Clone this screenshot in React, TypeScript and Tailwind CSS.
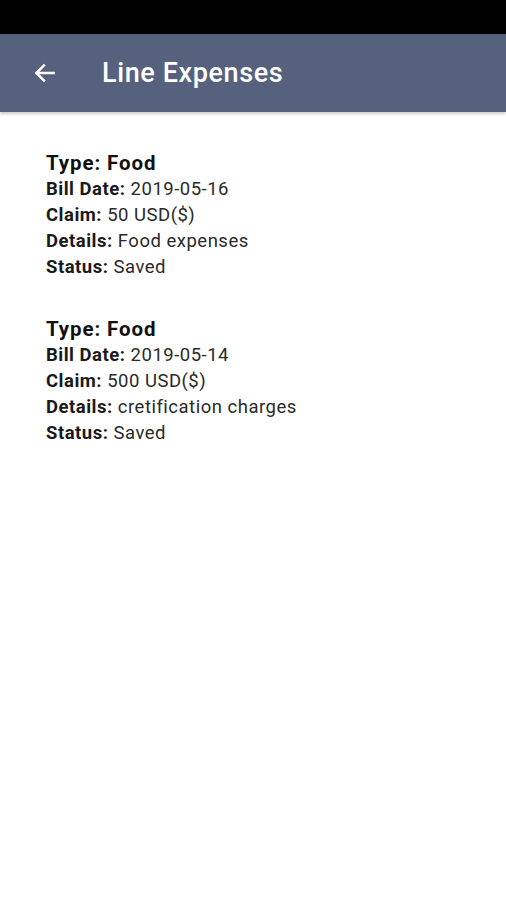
import React from "react";

const items = [
  { type: "Food", date: "2019-05-16", claim: "50 USD($)", details: "Food expenses", status: "Saved" },
  { type: "Food", date: "2019-05-14", claim: "500 USD($)", details: "cretification charges", status: "Saved" },
];

function Row({ label, value }: { label: string; value: string }) {
  return (
    <div className="h-[26px] leading-[26px] text-[18.5px] tracking-[0.5px] text-[#2a2a2a] whitespace-nowrap">
      <span className="font-bold text-[#1a1a1a]">{label}:</span> <span>{value}</span>
    </div>
  );
}

export default function App() {
  return (
    <div className="w-[506px] h-[900px] bg-white flex flex-col" style={{ fontFamily: "Roboto, 'Noto Sans', sans-serif" }}>
      <div className="h-[34px] bg-black" />
      <div className="h-[78px] bg-[#56617e] flex items-center shadow-[0_2px_3px_rgba(0,0,0,0.2)] relative z-10">
        <div className="w-[102px] flex items-center pl-[32px]">
          <svg width="26" height="26" viewBox="0 0 24 24" fill="none" stroke="white" strokeWidth="2.3" strokeLinecap="square">
            <path d="M20 12H5M11 5l-7 7 7 7" />
          </svg>
        </div>
        <div className="text-white text-[27px] font-medium tracking-[0.6px]">Line Expenses</div>
      </div>
      <div className="pl-[46px] pt-[38px] flex flex-col gap-[36px]">
        {items.map((it, i) => (
          <div key={i} className="flex flex-col">
            <div className="h-[26px] leading-[26px] text-[20.5px] font-bold tracking-[0.9px] text-[#111]">Type: {it.type}</div>
            <Row label="Bill Date" value={it.date} />
            <Row label="Claim" value={it.claim} />
            <Row label="Details" value={it.details} />
            <Row label="Status" value={it.status} />
          </div>
        ))}
      </div>
    </div>
  );
}
